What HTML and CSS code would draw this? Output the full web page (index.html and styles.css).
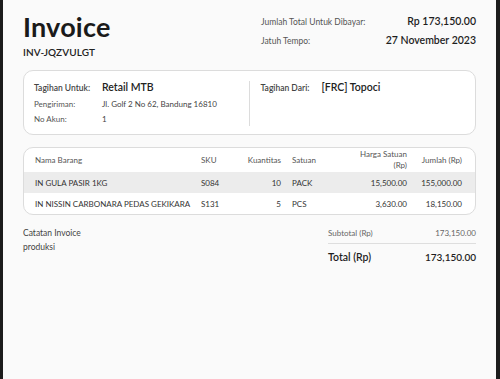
FILE: index.html
```html
<!DOCTYPE html>
<html lang="id">
<head>
<meta charset="utf-8">
<title>Invoice</title>
<link rel="stylesheet" href="styles.css">
</head>
<body>
<div class="page">
  <header class="top">
    <div class="title-block">
      <h1 class="title">Invoice</h1>
      <div class="inv-no">INV-JQZVULGT</div>
    </div>
    <div class="summary">
      <div class="sum-row"><span class="sum-label">Jumlah Total Untuk Dibayar:</span><span class="sum-value">Rp 173,150.00</span></div>
      <div class="sum-row"><span class="sum-label">Jatuh Tempo:</span><span class="sum-value">27 November 2023</span></div>
    </div>
  </header>

  <section class="card parties">
    <div class="party">
      <div class="kv main"><span class="k">Tagihan Untuk:</span><span class="v big">Retail MTB</span></div>
      <div class="kv"><span class="k light">Pengiriman:</span><span class="v">Jl. Golf 2 No 62, Bandung 16810</span></div>
      <div class="kv"><span class="k light">No Akun:</span><span class="v">1</span></div>
    </div>
    <div class="divider"></div>
    <div class="party right">
      <div class="kv main"><span class="k">Tagihan Dari:</span><span class="v big">[FRC] Topoci</span></div>
    </div>
  </section>

  <section class="card items">
    <div class="row head">
      <div class="c name">Nama Barang</div>
      <div class="c sku">SKU</div>
      <div class="c qty">Kuantitas</div>
      <div class="c unit">Satuan</div>
      <div class="c price">Harga Satuan<br>(Rp)</div>
      <div class="c total">Jumlah (Rp)</div>
    </div>
    <div class="row shade">
      <div class="c name">IN GULA PASIR 1KG</div>
      <div class="c sku">S084</div>
      <div class="c qty">10</div>
      <div class="c unit">PACK</div>
      <div class="c price">15,500.00</div>
      <div class="c total">155,000.00</div>
    </div>
    <div class="row">
      <div class="c name">IN NISSIN CARBONARA PEDAS GEKIKARA</div>
      <div class="c sku">S131</div>
      <div class="c qty">5</div>
      <div class="c unit">PCS</div>
      <div class="c price">3,630.00</div>
      <div class="c total">18,150.00</div>
    </div>
  </section>

  <section class="bottom">
    <div class="notes">
      <div>Catatan Invoice</div>
      <div>produksi</div>
    </div>
    <div class="totals">
      <div class="t-row sub"><span>Subtotal (Rp)</span><span>173,150.00</span></div>
      <div class="t-row grand"><span>Total (Rp)</span><span class="grand-value">173,150.00</span></div>
    </div>
  </section>
</div>
</body>
</html>
```
FILE: styles.css
```css
html, body {
  margin: 0;
  padding: 0;
  height: 100%;
}
body {
  background: #1c1c1c;
  padding: 0 4px 0 3px;
  box-sizing: border-box;
  font-family: Lato, "Noto Sans", sans-serif;
  color: #1e1e1e;
}
.page {
  background: #fafafa;
  height: 100%;
  padding: 12px 20px 0 20px;
  box-sizing: border-box;
}
.top {
  display: flex;
  justify-content: space-between;
  height: 58px;
}
.title {
  margin: 0;
  font-size: 27px;
  font-weight: 700;
  line-height: 30px;
  letter-spacing: 0.2px;
  color: #1a1a1a;
}
.inv-no {
  margin-top: 4px;
  font-size: 10px;
  font-weight: 600;
  letter-spacing: 0.1px;
  color: #222;
}
.summary {
  width: 215px;
  padding-top: 3px;
}
.sum-row {
  display: flex;
  justify-content: space-between;
  align-items: baseline;
  height: 19px;
}
.sum-label {
  font-size: 8.5px;
  color: #555;
}
.sum-value {
  font-size: 10.5px;
  font-weight: 600;
  color: #1e1e1e;
}
.card {
  background: #fff;
  border: 1px solid #dcdcdc;
  border-radius: 10px;
}
.parties {
  display: flex;
  padding: 10px 0 8px;
  height: 45px;
}
.party {
  flex: 1;
  padding: 0 10px;
}
.party.right {
  padding-left: 11px;
}
.divider {
  width: 1px;
  background: #dcdcdc;
}
.kv {
  display: flex;
  align-items: baseline;
  height: 15px;
}
.kv.main {
  height: 18px;
}
.party .k {
  width: 68px;
  font-size: 8.5px;
  font-weight: 600;
  color: #444;
}
.party.right .k {
  width: 61px;
}
.party .k.light {
  font-size: 8px;
  font-weight: 400;
  color: #555;
}
.v {
  font-size: 8px;
  color: #444;
}
.v.big {
  font-size: 10.5px;
  font-weight: 600;
  color: #222;
}
.items {
  margin-top: 12px;
  overflow: hidden;
}
.row {
  display: grid;
  grid-template-columns: 166px 36px 44px 56px 70px 1fr;
  align-items: center;
  height: 21px;
  padding: 0 13px 0 11px;
  font-size: 8px;
  color: #333;
}
.row.head {
  height: 24px;
  color: #555;
}
.row.shade {
  background: #ececec;
}
.c.qty, .c.price, .c.total {
  text-align: right;
}
.c.unit {
  padding-left: 11px;
}
.head .price {
  line-height: 11px;
}
.bottom {
  display: flex;
  justify-content: space-between;
  margin-top: 11px;
}
.notes {
  font-size: 8.5px;
  color: #444;
  line-height: 14px;
}
.totals {
  width: 148px;
  padding-top: 2px;
}
.t-row {
  display: flex;
  justify-content: space-between;
  align-items: baseline;
}
.t-row.sub {
  font-size: 8px;
  color: #666;
  padding-bottom: 5px;
  border-bottom: 1px solid #dedede;
}
.t-row.grand {
  padding-top: 7px;
  font-size: 10.5px;
  font-weight: 600;
  color: #1e1e1e;
}
.grand-value {
  font-size: 10px;
}
```
